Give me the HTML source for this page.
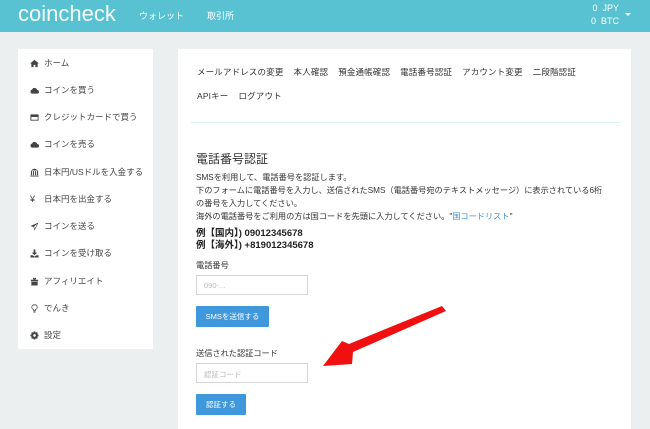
<!DOCTYPE html>
<html><head><meta charset="utf-8"><style>
*{margin:0;padding:0;box-sizing:border-box}
body{width:650px;height:424px;overflow:hidden;background:#ebeff0;font-family:"Liberation Sans","Noto Sans CJK JP",sans-serif;color:#333;position:relative}
.hdr{position:absolute;left:0;top:0;width:650px;height:32px;background:#58c2d3}
.logo{position:absolute;left:18px;top:1px;font-size:22px;color:#f4fbfc;font-weight:300}
.hn{position:absolute;top:9px;font-size:9px;color:#fff}
.bal{position:absolute;right:31px;font-size:9px;color:#fff}
.side{position:absolute;left:18px;top:49px;width:135px;height:300px;background:#fff}
.si{position:absolute;left:12px;font-size:8.5px;color:#444;white-space:nowrap;display:flex;align-items:center}
.si svg{width:9px;height:9px;margin-right:5px;fill:#444}
.main{position:absolute;left:178px;top:49px;width:453px;height:380px;background:#fff}
.a{position:absolute;white-space:nowrap}
.nav{font-size:8.5px;color:#333;letter-spacing:0.15px}
.inp{position:absolute;left:196px;width:112px;height:20px;border:1px solid #d6d6d6;background:#fff;font-size:7.5px;color:#bbb;padding:5px 0 0 7px}
.btn{position:absolute;left:196px;height:21px;background:#3f98dc;color:#fff;font-size:7.5px;text-align:center;line-height:21px;border-radius:1px}
.t{font-size:8.2px;color:#333}
</style></head><body>
<div class="hdr">
<div class="logo">coincheck</div>
<div class="hn" style="left:139px">ウォレット</div>
<div class="hn" style="left:207px">取引所</div>
<div class="bal" style="top:3px">0&nbsp; JPY</div>
<div class="bal" style="top:16px">0&nbsp; BTC</div>
<div style="position:absolute;left:625px;top:13px;border-left:3px solid transparent;border-right:3px solid transparent;border-top:3px solid #fff"></div>
</div>
<div class="side">
<div class="si" style="top:8px"><svg viewBox="0 0 10 10"><path d="M5 1 L0 5 L1.5 5 L1.5 9 L4 9 L4 6.5 L6 6.5 L6 9 L8.5 9 L8.5 5 L10 5 Z"/></svg>ホーム</div>
<div class="si" style="top:35px"><svg viewBox="0 0 10 10"><path d="M2.5 8.5 A2.3 2.3 0 0 1 2.3 4 A3 3 0 0 1 8 4.5 A2 2 0 0 1 8 8.5 Z"/></svg>コインを買う</div>
<div class="si" style="top:62px"><svg viewBox="0 0 10 10"><path d="M0.5 1.5 H9.5 V8.5 H0.5 Z M1.5 4.5 V7.5 H8.5 V4.5 Z"/></svg>クレジットカードで買う</div>
<div class="si" style="top:89px"><svg viewBox="0 0 10 10"><path d="M2.5 8.5 A2.3 2.3 0 0 1 2.3 4 A3 3 0 0 1 8 4.5 A2 2 0 0 1 8 8.5 Z"/></svg>コインを売る</div>
<div class="si" style="top:117px"><svg viewBox="0 0 10 10"><path d="M5 0.5 L0.5 2.8 H9.5 Z M1 3.5 H2.2 V8 H1 Z M3.2 3.5 H4.4 V8 H3.2 Z M5.6 3.5 H6.8 V8 H5.6 Z M7.8 3.5 H9 V8 H7.8 Z M0.3 8.5 H9.7 V9.5 H0.3 Z"/></svg>日本円/USドルを入金する</div>
<div class="si" style="top:144px"><span style="width:9px;margin-right:5px;font-size:9px">¥</span>日本円を出金する</div>
<div class="si" style="top:171px"><svg viewBox="0 0 10 10"><path d="M9.5 0.5 L0.5 4.5 L4 5.5 L5 9.5 Z M4.5 5 L8 2 L5.2 7.5 Z" fill-rule="evenodd"/></svg>コインを送る</div>
<div class="si" style="top:198px"><svg viewBox="0 0 10 10"><path d="M4 0.5 H6 V4 H8 L5 7 L2 4 H4 Z M0.5 7 H3 L5 8.5 L7 7 H9.5 V9.5 H0.5 Z"/></svg>コインを受け取る</div>
<div class="si" style="top:226px"><svg viewBox="0 0 10 10"><path d="M1 3 H9 V5 H1 Z M1.5 5.5 H8.5 V9.5 H1.5 Z M3 1 A1.5 1.5 0 0 1 5 3 A1.5 1.5 0 0 1 7 1 L6 3 H4 Z"/></svg>アフィリエイト</div>
<div class="si" style="top:253px"><svg viewBox="0 0 10 10"><path d="M5 0.5 A3 3 0 0 1 7 6 L6.5 7.5 H3.5 L3 6 A3 3 0 0 1 5 0.5 Z M5 1.5 A2 2 0 0 0 4 5.5 L4.3 6.7 H5.7 L6 5.5 A2 2 0 0 0 5 1.5 Z M3.8 8.2 H6.2 V9.5 H3.8 Z" fill-rule="evenodd"/></svg>でんき</div>
<div class="si" style="top:280px"><svg viewBox="0 0 10 10"><path d="M4 0.5 H6 L6.3 2 L7.6 1.3 L8.7 2.4 L8 3.7 L9.5 4 V6 L8 6.3 L8.7 7.6 L7.6 8.7 L6.3 8 L6 9.5 H4 L3.7 8 L2.4 8.7 L1.3 7.6 L2 6.3 L0.5 6 V4 L2 3.7 L1.3 2.4 L2.4 1.3 L3.7 2 Z M5 3.5 A1.5 1.5 0 1 0 5.01 3.5 Z" fill-rule="evenodd"/></svg>設定</div>
</div>
<div class="main"></div>
<div class="a nav" style="left:197px;top:66px">メールアドレスの変更&nbsp;&nbsp;&nbsp; 本人確認&nbsp;&nbsp;&nbsp; 預金通帳確認&nbsp;&nbsp;&nbsp; 電話番号認証&nbsp;&nbsp;&nbsp; アカウント変更&nbsp;&nbsp;&nbsp; 二段階認証</div>
<div class="a nav" style="left:197px;top:90px">APIキー&nbsp;&nbsp;&nbsp; ログアウト</div>
<div class="a" style="left:191px;top:122px;width:429px;height:1px;background:#d8f0ee"></div>
<div class="a" style="left:196px;top:150px;font-size:12px;color:#333">電話番号認証</div>
<div class="a t" style="left:196px;top:171px">SMSを利用して、電話番号を認証します。</div>
<div class="a t" style="left:196px;top:184px">下のフォームに電話番号を入力し、送信されたSMS（電話番号宛のテキストメッセージ）に表示されている6桁</div>
<div class="a t" style="left:196px;top:197px">の番号を入力してください。</div>
<div class="a t" style="left:196px;top:210px">海外の電話番号をご利用の方は国コードを先頭に入力してください。"<span style="color:#3a8fd0">国コードリスト</span>"</div>
<div class="a" style="left:196px;top:225px;font-size:9.5px;font-weight:bold;color:#222">例【国内】) 09012345678</div>
<div class="a" style="left:196px;top:237px;font-size:9.5px;font-weight:bold;color:#222">例【海外】) +819012345678</div>
<div class="a t" style="left:196px;top:259px">電話番号</div>
<div class="inp" style="top:275px">090-...</div>
<div class="btn" style="top:306px;width:73px">SMSを送信する</div>
<div class="a t" style="left:196px;top:347px">送信された認証コード</div>
<div class="inp" style="top:363px">認証コード</div>
<div class="btn" style="top:394px;width:50px">認証する</div>
<svg style="position:absolute;left:0;top:0" width="650" height="424"><path d="M442,306 L446,311 L353,352 L352,364 L323,366 L342,341 L349,344 Z" fill="#f01010"/></svg>
</body></html>
